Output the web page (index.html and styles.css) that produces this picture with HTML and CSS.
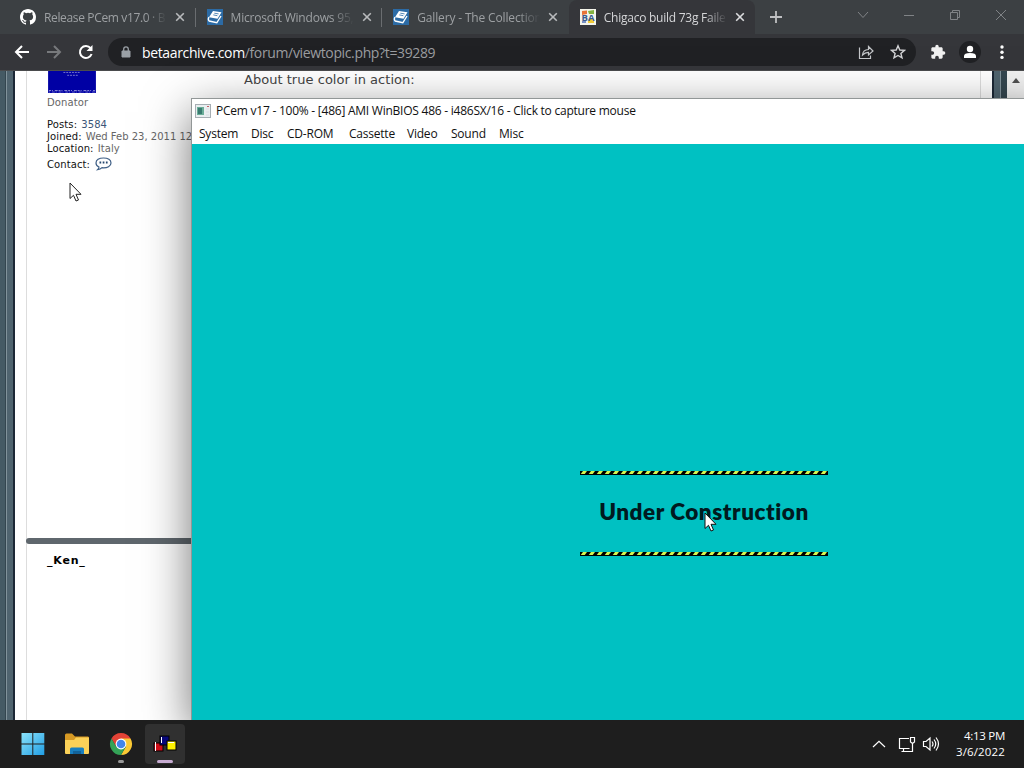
FILE: index.html
```html
<!DOCTYPE html>
<html lang="en">

<head>
    <meta charset="UTF-8">
    <title>Desktop</title>
    <link rel="stylesheet" href="styles.css">
</head>

<body>
    <!-- Shared icons -->
    <svg class="defs" width="0" height="0">
        <symbol id="close" viewBox="0 0 10 10">
            <path d="M1.2 1.2L8.8 8.8M8.8 1.2L1.2 8.8" fill="none" stroke="currentColor" stroke-width="1.6" />
        </symbol>
        <symbol id="book" viewBox="0 0 16 16">
            <rect width="16" height="16" fill="#2c6ba5" />
            <path d="M6 2L14.5 3.2L10.5 9.8L2 8.2Z" fill="#fff" />
            <path d="M2 8.2Q.6 10.4 2.2 12L9.8 13.8L14 7" fill="none" stroke="#fff" stroke-width="1.4" />
            <path d="M7.3 4.2L11.6 4.9M6.3 5.9L10.4 6.7" fill="none" stroke="#2c6ba5" stroke-width=".8" />
        </symbol>
    </svg>

    <!-- Browser -->
    <div class="tabs">
        <div class="tab">
            <svg class="favicon" viewBox="0 0 16 16"><path fill="#fff" d="M8 0C3.58 0 0 3.58 0 8c0 3.54 2.29 6.53 5.47 7.59.4.07.55-.17.55-.38 0-.19-.01-.82-.01-1.49-2.01.37-2.53-.49-2.69-.94-.09-.23-.48-.94-.82-1.13-.28-.15-.68-.52-.01-.53.63-.01 1.08.58 1.23.82.72 1.21 1.87.87 2.33.66.07-.52.28-.87.51-1.07-1.78-.2-3.64-.89-3.64-3.95 0-.87.31-1.59.82-2.15-.08-.2-.36-1.02.08-2.12 0 0 .67-.21 2.2.82a7.6 7.6 0 0 1 4 0c1.53-1.04 2.2-.82 2.2-.82.44 1.1.16 1.92.08 2.12.51.56.82 1.27.82 2.15 0 3.07-1.87 3.75-3.65 3.95.29.25.54.73.54 1.48 0 1.07-.01 1.93-.01 2.2 0 .21.15.46.55.38A8.01 8.01 0 0 0 16 8c0-4.42-3.58-8-8-8z" /></svg>
            <span class="title t1">Release PCem v17.0 · B</span>
            <svg class="close"><use href="#close" /></svg>
        </div>
        <div class="tab">
            <svg class="favicon"><use href="#book" /></svg>
            <span class="title t2">Microsoft Windows 95,</span>
            <svg class="close"><use href="#close" /></svg>
        </div>
        <div class="tab">
            <svg class="favicon"><use href="#book" /></svg>
            <span class="title t3">Gallery - The Collection</span>
            <svg class="close"><use href="#close" /></svg>
        </div>
        <div class="tab active">
            <svg class="favicon" viewBox="0 0 16 16">
                <rect width="16" height="16" fill="#f4f4ea" />
                <path d="M2 2L7 1.5V5L2 6Z" fill="#e87438" />
                <path d="M8 2L14 1V5L9 5Z" fill="#83b440" />
                <path d="M8 10H14V14H8Z" fill="#f0cb36" />
                <path d="M2 12H6V14H2Z" fill="#7891c4" />
                <text x="1.5" y="12" font-size="9.5" font-weight="bold" fill="#3a5c90" textLength="13" lengthAdjust="spacingAndGlyphs">BA</text>
            </svg>
            <span class="title t4">Chigaco build 73g Faile</span>
            <svg class="close"><use href="#close" /></svg>
        </div>
        <svg class="plus" viewBox="0 0 12 12"><path d="M6 0V12M0 6H12" stroke="#bfc0c2" stroke-width="1.8" /></svg>
        <div class="caption">
            <svg width="12" height="12" viewBox="0 0 12 12"><path d="M1 3L6 8.5L11 3" /></svg>
            <svg width="12" height="12" viewBox="0 0 12 12"><path d="M1 6.5H11" /></svg>
            <svg width="12" height="12" viewBox="0 0 12 12"><path d="M1.5 3.5H8.5V10.5H1.5ZM3.5 3.5V1.5H10.5V8.5H8.5" /></svg>
            <svg width="12" height="12" viewBox="0 0 12 12"><path d="M1 1L11 11M11 1L1 11" /></svg>
        </div>
    </div>

    <div class="toolbar">
        <svg class="nav" viewBox="0 0 16 16"><path d="M15 8H2M8 2L2 8L8 14" /></svg>
        <svg class="nav dim" viewBox="0 0 16 16"><path d="M1 8H14M8 2L14 8L8 14" /></svg>
        <svg class="nav" viewBox="0 0 16 16"><path d="M13.6 10A6 6 0 1 1 12.6 4.2" /><path d="M14.5 1V7H8.5Z" fill="#fff" stroke="none" /></svg>
        <div class="address">
            <svg class="lock" viewBox="0 0 10 12"><path d="M1 5H9V11H1Z" fill="#9aa0a6" stroke="#9aa0a6" /><path d="M2.7 5V3.2A2.3 2.3 0 0 1 7.3 3.2V5" fill="none" stroke="#9aa0a6" stroke-width="1.3" /></svg>
            <span class="url"><b>betaarchive.com</b>/forum/viewtopic.php?t=39289</span>
            <svg class="share" viewBox="0 0 16 16"><path d="M1.5 3.5V14.5H12.5V11.5M4.5 11Q5 5.7 10.5 5.5V2.5L15 7L10.5 11V8.3Q7 8.2 4.5 11Z" fill="none" stroke="#c4c6c9" stroke-width="1.2" /></svg>
            <svg class="star" viewBox="0 0 16 16"><path d="M8 1.8L9.8 6L14.4 6.4L10.9 9.4L12 13.9L8 11.5L4 13.9L5.1 9.4L1.6 6.4L6.2 6Z" fill="none" stroke="#d3d4d6" stroke-width="1.4" /></svg>
        </div>
        <svg class="puzzle" viewBox="0 0 24 24"><path fill="#f1f1f1" d="M20.5 11H19V7c0-1.1-.9-2-2-2h-4V3.5a2.5 2.5 0 0 0-5 0V5H4c-1.1 0-2 .9-2 2v3.8h1.500c1.5 0 2.7 1.2 2.7 2.7S5 16.2 3.5 16.2H2V20c0 1.1.9 2 2 2h3.8v-1.500c0-1.5 1.2-2.7 2.7-2.7s2.7 1.2 2.7 2.7V22H17c1.1 0 2-.9 2-2v-4h1.5a2.5 2.5 0 0 0 0-5z" /></svg>
        <svg class="avatar" viewBox="0 0 22 22"><circle cx="11" cy="11" r="11" fill="#202124" /><circle cx="11" cy="8" r="3.2" fill="#fff" /><path d="M5 17V15Q5 12 11 12T17 15V17Z" fill="#fff" /></svg>
        <svg class="dots" viewBox="0 0 4 16"><circle cx="2" cy="3" r="1.7" /><circle cx="2" cy="8.2" r="1.7" /><circle cx="2" cy="13.4" r="1.7" /></svg>
    </div>

    <!-- Forum page -->
    <div class="page">
        <div class="edge left"></div>
        <div class="forum">
            <div class="post first">
                <div class="profile">
                    <svg class="pic" viewBox="0 0 50 23">
                        <rect width="50" height="23" fill="#0000a4" />
                        <path d="M16 1.5H34M20 4.5H31" stroke="#7878cc" stroke-dasharray="2 1" />
                        <path d="M1 20.5H49" stroke="#9797dc" stroke-dasharray="2 1 1 2 3 1" />
                        <path d="M1 22H49" stroke="#6666ca" stroke-dasharray="1 2 3 1" />
                    </svg>
                    <p class="rank">Donator</p>
                    <p><b>Posts:</b> <a>3584</a></p>
                    <p><b>Joined:</b> <span>Wed Feb 23, 2011 12</span></p>
                    <p><b>Location:</b> Italy</p>
                    <p class="contact"><b>Contact:</b>
                        <svg width="17" height="14" viewBox="0 0 17 14"><path d="M8.5 1C4 1 1 3 1 5.9C1 7.7 2.2 9.2 4 10Q3.8 11.7 2.6 12.7Q5.4 12.5 7 10.7C12.5 11.2 16 9 16 5.9C16 3 13 1 8.5 1Z" fill="#fff" stroke="#3f5f86" stroke-width="1.2" /><path d="M4.5 5.5H6.200M7.700 5.5H9.400M10.900 5.5H12.600" stroke="#26486f" stroke-width="1.8" /></svg>
                    </p>
                </div>
                <div class="text">About true color in action:</div>
            </div>
            <div class="divider"></div>
            <div class="post">
                <p class="author">_Ken_</p>
            </div>
        </div>
        <div class="edge right"></div>
        <div class="scrollbar"><svg width="8" height="5" viewBox="0 0 8 5"><path d="M0 5L4 0L8 5Z" fill="#505050" /></svg></div>
    </div>

    <!-- PCem window -->
    <div class="window">
        <div class="titlebar">
            <svg width="16" height="14" viewBox="0 0 16 14">
                <rect x=".5" y=".5" width="15" height="13" fill="#e9eef0" stroke="#a6aeb3" />
                <rect x="2" y="3" width="7" height="8" fill="#6aad98" />
                <rect x="3" y="4" width="4" height="6" fill="#397a70" />
                <path d="M11 5H14M11 8H14M11 11H14" stroke="#d8dfe3" /><path d="M12 2.5H14" stroke="#c45d63" />
            </svg>
            <span>PCem v17 - 100% - [486] AMI WinBIOS 486 - i486SX/16 - Click to capture mouse</span>
        </div>
        <div class="menu">
            <span class="m1">System</span><span class="m2">Disc</span><span class="m3">CD-ROM</span><span class="m4">Cassette</span><span class="m5">Video</span><span class="m6">Sound</span><span class="m7">Misc</span>
        </div>
        <div class="screen">
            <div class="construction">
                <svg class="stripe" width="248" height="4">
                    <defs>
                        <pattern id="hazard" width="8" height="4" patternUnits="userSpaceOnUse">
                            <rect width="8" height="4" fill="#000" />
                            <path d="M3 0H7L4 4H0Z" fill="#d4f651" />
                        </pattern>
                    </defs>
                    <rect width="248" height="4" fill="url(#hazard)" />
                    <path d="M0 3.5H248" stroke="#000" />
                </svg>
                <div class="sign">Under Construction</div>
                <svg class="stripe" width="248" height="4"><rect width="248" height="4" fill="url(#hazard)" /><path d="M0 3.5H248" stroke="#000" /></svg>
            </div>
        </div>
    </div>

    <!-- Pointers -->
    <svg class="pointer host" width="13" height="20" viewBox="0 0 13 20"><path d="M1 1V16.5L4.5 13.3L7 19L9.5 18L7 12.3H12Z" fill="#fff" stroke="#222" /></svg>
    <svg class="pointer guest" width="13" height="20" viewBox="0 0 13 20"><path d="M1 1V16.5L4.5 13.3L7 19L9.5 18L7 12.3H12Z" fill="#fff" stroke="#111" /></svg>

    <!-- Taskbar -->
    <div class="taskbar">
        <div class="app">
            <svg width="24" height="24" viewBox="0 0 24 24">
                <defs><linearGradient id="win" x2="1" y2="1"><stop stop-color="#8be3fb" /><stop offset="1" stop-color="#219ee4" /></linearGradient></defs>
                <path d="M.5 1H11.300V11.500H.5ZM12.300 1H23.300V11.500H12.300ZM.5 12.500H11.300V23H.5ZM12.300 12.500H23.300V23H12.300Z" fill="url(#win)" />
            </svg>
        </div>
        <div class="app">
            <svg width="26" height="24" viewBox="0 0 26 24">
                <path d="M1 3Q1 1.500 2.500 1.500H8L11 4.500H24Q25 4.500 25 6V12H1Z" fill="#d79a24" />
                <path d="M1 8H10L12 5.500H25V21Q25 22 24 22H2Q1 22 1 21Z" fill="#fbd158" />
                <path d="M6 22V17Q6 15.500 7.500 15.500H18.500Q20 15.500 20 17V22Z" fill="#197fbf" />
                <path d="M9 19H17V22H9Z" fill="#126299" />
            </svg>
        </div>
        <div class="app">
            <svg width="24" height="24" viewBox="0 0 24 24">
                <path d="M12 12L2.470 6.500A11 11 0 0 1 21.530 6.500Z" fill="#e34336" />
                <path d="M12 6.500H21.530A11 11 0 0 1 12 23L16.760 14.750Z" fill="#fbc934" />
                <path d="M2.470 6.500L7.240 14.750L12 12V6.500Z" fill="#e34336" />
                <path d="M2.470 6.500A11 11 0 0 0 12 23L16.760 14.750H7.240Z" fill="#34a357" />
                <circle cx="12" cy="12" r="5.400" fill="#fff" /><circle cx="12" cy="12" r="4.300" fill="#4385ea" />
            </svg>
            <i class="running"></i>
        </div>
        <div class="app current">
            <svg width="24" height="18" viewBox="0 0 24 18">
                <rect x="1" y="8" width="9" height="8" fill="#d20d18" stroke="#000" />
                <path d="M2.500 7V16" stroke="#fff" />
                <rect x="7" y="1" width="9" height="9" fill="#08087c" stroke="#000" />
                <path d="M8.500 2V8" stroke="#fff" />
                <rect x="14" y="6" width="9" height="9" fill="#fff200" stroke="#000" />
                <path d="M15 7.500H21" stroke="#fff" />
            </svg>
            <i class="running"></i>
        </div>
        <div class="tray">
            <svg width="14" height="8" viewBox="0 0 14 8"><path d="M1 7L7 1.300L13 7" /></svg>
            <svg class="network" width="18" height="17" viewBox="0 0 18 17"><path d="M11 2.500H1.500V12.500H11.500M5.500 12.500V15.500M3.500 15.500H14.500V8M12.500 1.500H16.500V6L14.500 7.500L12.500 6Z" /></svg>
            <svg class="sound" width="18" height="16" viewBox="0 0 18 16"><path d="M1.500 5.500H4L8 2V14L4 10.500H1.500ZM10 5.500Q12 8 10 10.500M12 3.500Q15.500 8 12 12.500M14 1.500Q19 8 14 14.500" /></svg>
            <div class="clock"><div class="time">4:13 PM</div><div>3/6/2022</div></div>
        </div>
    </div>
</body>

</html>
```
FILE: styles.css
```css
* {
    box-sizing: border-box;
}

body {
    margin: 0;
    width: 1024px;
    height: 768px;
    overflow: hidden;
    display: flex;
    flex-direction: column;
    position: relative;
    font-family: "Open Sans", "Noto Sans", sans-serif;
    font-size: 12px;
}

.defs {
    position: absolute;
}

svg {
    flex: none;
}

/* Browser tabs */
.tabs {
    height: 34px;
    flex: none;
    display: flex;
    align-items: center;
    background: #3c4043;
    padding-left: 9px;
}

.tab {
    width: 186.6px;
    height: 34px;
    flex: none;
    display: flex;
    align-items: center;
    padding-left: 11px;
    color: #9da0a3;
    background: linear-gradient(#6a6d70, #6a6d70) right 8px / 1px 19px no-repeat;
}

.tab:nth-child(3) {
    background: none;
}

.tab.active {
    background: #35363a;
    color: #d5d6d8;
    border-radius: 8px 8px 0 0;
}

.favicon {
    width: 16px;
    height: 16px;
}

.title {
    width: 123px;
    margin-left: 8px;
    white-space: nowrap;
    -webkit-mask-image: linear-gradient(90deg, #000 82%, transparent);
    mask-image: linear-gradient(90deg, #000 82%, transparent);
}

.t1 { letter-spacing: -.35px; }
.t2 { letter-spacing: -.2px; }
.t3 { letter-spacing: -.15px; }
.t4 { letter-spacing: -.25px; }

.close {
    width: 10px;
    height: 10px;
    margin-left: 8px;
    color: #b9bbbd;
}

.active .close {
    color: #dcdddf;
}

.plus {
    width: 12px;
    height: 12px;
    margin-left: 15px;
}

.caption {
    margin-left: auto;
    margin-right: 17px;
    margin-bottom: 5px;
    display: flex;
    gap: 34px;
}

.caption path {
    fill: none;
    stroke: #808386;
}

/* Toolbar */
.toolbar {
    height: 37px;
    flex: none;
    display: flex;
    align-items: center;
    background: #35363a;
    padding-left: 14px;
    border-bottom: 1px solid #4a4b4d;
}

.nav {
    width: 16px;
    height: 16px;
    margin-right: 16px;
    fill: none;
    stroke: #fff;
    stroke-width: 2;
}

.dim {
    stroke: #77797c;
}

.address {
    width: 808px;
    height: 28px;
    margin-left: -2px;
    border-radius: 14px;
    background: #202124;
    display: flex;
    align-items: center;
    padding: 0 10px 0 13px;
}

.lock {
    width: 10px;
    height: 12px;
}

.url {
    margin-left: 11px;
    font-size: 14px;
    color: #9b9da0;
    flex: 1;
    letter-spacing: -.36px;
}

.url b {
    color: #fff;
    font-weight: normal;
}

.share,
.star {
    width: 16px;
    height: 16px;
    margin-left: 16px;
}

.puzzle {
    width: 16px;
    height: 16px;
    margin-left: 14px;
}

.avatar {
    width: 22px;
    height: 22px;
    margin-left: 13px;
}

.dots {
    width: 4px;
    height: 16px;
    margin-left: 19px;
    fill: #fff;
}

/* Forum page */
.page {
    height: 649px;
    flex: none;
    display: flex;
    background: #fff;
}

.edge {
    width: 15px;
    background: linear-gradient(90deg, #455a64 5px, #34464f 5px, #34464f 6px, #82939b 6px, #82939b 7px, #50646f 7px, #50646f 13px, #1c2836 13px);
}

.edge.right {
    background: linear-gradient(90deg, #1c2836 2px, #50646f 2px, #50646f 8px, #82939b 8px, #82939b 9px, #34464f 9px);
}

.forum {
    width: 955px;
    margin: 0 11px;
    border-left: 1px solid #ddd;
    border-right: 1px solid #ddd;
    font-family: "DejaVu Sans", Verdana, sans-serif;
    color: #666;
}

.post {
    display: flex;
    padding-left: 20px;
}

.first {
    height: 467px;
}

.profile {
    width: 197px;
    font-size: 10px;
}

.profile p {
    margin: 0;
    line-height: 12px;
    white-space: nowrap;
    letter-spacing: .1px;
    word-spacing: .8px;
}

.profile p span {
    letter-spacing: 0;
    word-spacing: 0;
}

.profile b {
    color: #111;
    font-weight: normal;
}

.profile a {
    color: #3b5578;
}

.pic {
    width: 50px;
    height: 22px;
    display: block;
}

.profile .rank {
    margin: 4px 0 10px;
}

.profile .contact {
    display: flex;
    align-items: center;
    gap: 5px;
    margin-top: 2px;
    height: 15px;
}

.contact svg {
    margin-bottom: 2px;
}

.text {
    margin-top: 1px;
    font-size: 13px;
    line-height: 16px;
    color: #444;
    letter-spacing: .03px;
}

.divider {
    height: 6px;
    margin-left: -1px;
    background: #5f676d;
    border-radius: 4px 0 0 4px;
}

.author {
    margin: 10px 0 0;
    font-size: 11px;
    font-weight: bold;
    color: #000;
    letter-spacing: .8px;
}

.scrollbar {
    flex: 1;
    background: #f1f1f1;
    display: flex;
    justify-content: center;
    padding-top: 7px;
}

/* PCem window */
.window {
    position: absolute;
    left: 191px;
    top: 98px;
    width: 860px;
    height: 622px;
    display: flex;
    flex-direction: column;
    border: 1px solid #929797;
    border-bottom: 0;
    background: #fff;
    box-shadow: 0 14px 44px rgba(0, 0, 0, .55);
    color: #111;
}

.titlebar {
    height: 24px;
    display: flex;
    align-items: center;
    padding: 0 0 1px 3px;
    gap: 5px;
    white-space: nowrap;
    letter-spacing: -.24px;
}

.menu {
    height: 21px;
    display: flex;
    align-items: center;
    padding-left: 7px;
    letter-spacing: -.22px;
}

.menu span {
    flex: none;
}

.m1 { width: 52px; }
.m2 { width: 36px; }
.m3 { width: 62px; }
.m4 { width: 58px; }
.m5 { width: 44px; }
.m6 { width: 48px; }
.m7 { width: 40px; }

.screen {
    flex: 1;
    background: #00c1c2;
    padding: 327px 0 0 388px;
}

.construction {
    width: 248px;
}

.stripe {
    display: block;
}

.sign {
    height: 77px;
    line-height: 74px;
    text-align: center;
    font-family: Lato, sans-serif;
    font-size: 22.5px;
    font-weight: 800;
    letter-spacing: .55px;
    color: #001a20;
    white-space: nowrap;
}

.pointer {
    position: absolute;
}

.host {
    left: 69px;
    top: 182px;
}

.guest {
    left: 704px;
    top: 512px;
}

/* Taskbar */
.taskbar {
    position: relative;
    height: 48px;
    flex: none;
    display: flex;
    align-items: center;
    gap: 4px;
    padding-left: 13px;
    background: #1e1e1e;
}

.app {
    width: 40px;
    height: 40px;
    display: flex;
    align-items: center;
    justify-content: center;
    position: relative;
    border-radius: 4px;
}

.current {
    background: #303030;
}

.running {
    position: absolute;
    bottom: 1px;
    width: 6px;
    height: 3px;
    border-radius: 2px;
    background: #999;
}

.current .running {
    width: 16px;
    background: #c7acd2;
}

.tray {
    margin-left: auto;
    padding-right: 19px;
    display: flex;
    align-items: center;
    color: #fff;
}

.tray path {
    fill: none;
    stroke: #fff;
    stroke-width: 1.2;
}

.network {
    margin-left: 12px;
}

.sound {
    margin-left: 6px;
}

.clock {
    width: 65px;
    font-size: 11.5px;
    line-height: 16px;
    text-align: right;
    letter-spacing: .15px;
}

.time {
    letter-spacing: -.3px;
}
```
